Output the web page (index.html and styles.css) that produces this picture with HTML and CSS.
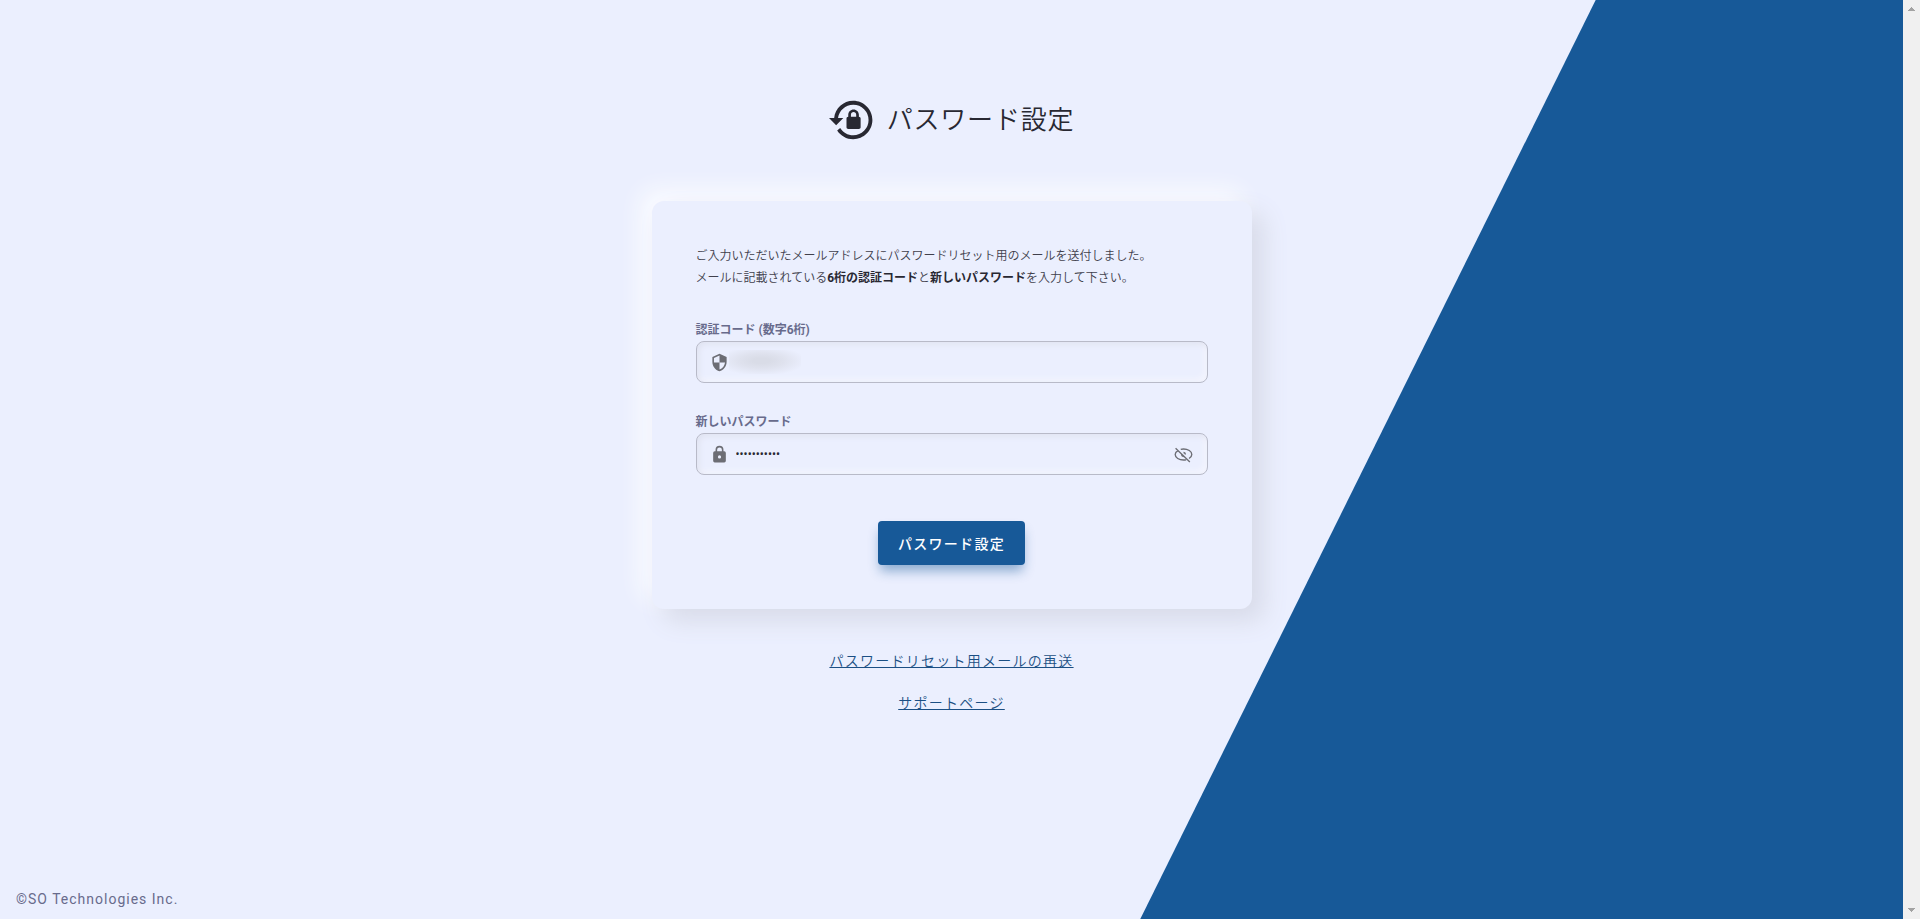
FILE: index.html
```html
<!DOCTYPE html>
<html lang="ja">
<head>
    <meta charset="UTF-8">
    <meta name="viewport" content="width=device-width, initial-scale=1.0">
    <title>パスワード設定</title>
    <link rel="stylesheet" href="styles.css">
</head>
<body>
    <div class="page">
        <main class="content">
            <h1 class="title">
                <svg class="title-icon" viewBox="0 0 24 24" aria-hidden="true"><path d="M12.63,2C18.16,2 22.64,6.5 22.64,12C22.64,17.5 18.16,22 12.63,22C9.12,22 6.05,20.18 4.26,17.43L5.84,16.18C7.25,18.47 9.76,20 12.64,20A8,8 0 0,0 20.64,12A8,8 0 0,0 12.64,4C8.56,4 5.2,7.06 4.71,11H7.47L3.73,14.73L0,11H2.69C3.19,5.95 7.45,2 12.63,2M15.59,10.24C16.09,10.25 16.5,10.65 16.5,11.16V15.77C16.5,16.27 16.09,16.69 15.58,16.69H10.05C9.54,16.69 9.13,16.27 9.13,15.77V11.16C9.13,10.65 9.54,10.25 10.04,10.24V9.23C10.04,7.7 11.29,6.46 12.81,6.46C14.34,6.46 15.59,7.7 15.59,9.23V10.24M12.81,7.86C12.06,7.86 11.44,8.47 11.44,9.23V10.24H14.19V9.23C14.19,8.47 13.57,7.86 12.81,7.86Z"/></svg>
                <span>パスワード設定</span>
            </h1>

            <form class="card">
                <p class="message">ご入力いただいたメールアドレスにパスワードリセット用のメールを送付しました。<br>メールに記載されている<strong>6桁の認証コード</strong>と<strong>新しいパスワード</strong>を入力して下さい。</p>

                <div class="field">
                    <label for="code">認証コード (数字6桁)</label>
                    <div class="input-box">
                        <svg class="icon" viewBox="0 0 24 24" aria-hidden="true"><path d="M12,1L3,5V11C3,16.55 6.84,21.74 12,23C17.16,21.74 21,16.55 21,11V5L12,1M12,11.99H19C18.47,16.11 15.72,19.78 12,20.93V12H5V6.3L12,3.19V11.99Z"/></svg>
                        <span class="masked-code"></span>
                        <input type="text" id="code" inputmode="numeric" maxlength="6">
                    </div>
                </div>

                <div class="field">
                    <label for="password">新しいパスワード</label>
                    <div class="input-box">
                        <svg class="icon" viewBox="0 0 24 24" aria-hidden="true"><path d="M12,17A2,2 0 0,0 14,15A2,2 0 0,0 12,13A2,2 0 0,0 10,15A2,2 0 0,0 12,17M18,8A2,2 0 0,1 20,10V20A2,2 0 0,1 18,22H6A2,2 0 0,1 4,20V10A2,2 0 0,1 6,8H7V6A5,5 0 0,1 12,1A5,5 0 0,1 17,6V8H18M12,3A3,3 0 0,0 9,6V8H15V6A3,3 0 0,0 12,3Z"/></svg>
                        <input type="password" id="password" value="password123">
                        <button type="button" class="toggle" aria-label="パスワードを表示">
                            <svg class="icon icon-line" viewBox="0 0 24 24" aria-hidden="true"><path d="M2 4L20 21.500M8.500 5.600Q10.200 5 12 5C17.500 5 22.500 8 22.500 12Q22.500 14.800 19 17M5 7.200Q1.500 9 1.500 12C1.500 16 6.500 19 12 19Q13.800 19 15.300 18.600M12 9.500Q14.300 9.700 14.500 12M9.500 12Q9.700 14 12 14.500"/></svg>
                        </button>
                    </div>
                </div>

                <button type="submit" class="submit">パスワード設定</button>
            </form>

            <nav class="links">
                <a href="#">パスワードリセット用メールの再送</a>
                <a href="#">サポートページ</a>
            </nav>
        </main>

        <footer class="footer">©SO Technologies Inc.</footer>
    </div>

    <div class="scrollbar" aria-hidden="true">
        <svg viewBox="0 0 7 4"><path d="M3 0h1v1h1v1h1v1h1v1H0V3h1V2h1V1h1z"/></svg>
        <svg viewBox="0 0 7 4"><path d="M0 0h7v1H6v1H5v1H4v1H3V3H2V2H1V1H0z"/></svg>
    </div>
</body>
</html>
```

FILE: styles.css
```css
* {
    box-sizing: border-box;
}

body {
    margin: 0;
    display: flex;
    min-height: 100vh;
    font-family: Roboto, "Noto Sans CJK JP", sans-serif;
    font-size: 14px;
    color: #282832;
    background: #ebeffe;
}

.page {
    flex: 1;
    display: flex;
    flex-direction: column;
    position: relative;
}

/* slanted blue area on the right */
.page::before {
    content: '';
    position: absolute;
    inset: 0;
    background: #175998;
    clip-path: polygon(83.85% 0, 100% 0, 100% 100%, 59.92% 100%);
}

.content {
    flex: 1;
    display: flex;
    flex-direction: column;
    align-items: center;
    position: relative;
    padding: 97px 16px 0;
}

.title {
    display: flex;
    align-items: center;
    gap: 12px;
    height: 46px;
    margin: 0 0 58px;
    font-size: 26px;
    font-weight: 350;
    line-height: 38px;
    letter-spacing: 0.03em;
}

.title-icon {
    width: 46px;
    height: 46px;
    fill: #282832;
}

.card {
    display: flex;
    flex-direction: column;
    width: 100%;
    max-width: 600px;
    padding: 44px;
    border-radius: 12px;
    background: #ebeffe;
    box-shadow: 12px 12px 24px #d8dbe9, -10px -10px 24px #fcfdff;
}

.message {
    margin: 0 0 32px;
    font-size: 12px;
    font-weight: 350;
    line-height: 22px;
    color: #40404c;
}

.message strong {
    color: #282832;
}

.field {
    margin-bottom: 30px;
}

.field label {
    display: block;
    padding-bottom: 1px;
    font-size: 12px;
    font-weight: bold;
    line-height: 19px;
    color: #686b8c;
}

.input-box {
    display: flex;
    align-items: center;
    height: 42px;
    padding: 0 14px 0 13px;
    border: 1px solid #b8bac8;
    border-radius: 8px;
    box-shadow: inset 2px 2px 6px #dfe2f0, inset -2px -2px 6px #f8f9ff;
}

.input-box input {
    flex: 1;
    min-width: 0;
    padding: 0 7px;
    border: 0;
    outline: 0;
    background: none;
    font-family: inherit;
    font-size: 12px;
    color: #282832;
}

.icon {
    display: block;
    flex: none;
    width: 19px;
    height: 19px;
    fill: #6c6d74;
}

.icon-line {
    fill: none;
    stroke: #6c6d74;
    stroke-width: 1.7;
}

.masked-code {
    width: 72px;
    height: 24px;
    background: radial-gradient(ellipse at 45% 45%, #d9dce7 15%, #dfe2ee 40%, #ebeffe 80%);
}

.toggle {
    padding: 0;
    border: 0;
    background: none;
    cursor: pointer;
}

.submit {
    align-self: center;
    height: 44px;
    margin-top: 16px;
    padding: 0 20px;
    border: 0;
    border-radius: 4px;
    background: #175998;
    box-shadow: 0 8px 12px -2px rgba(23, 89, 152, 0.45);
    color: #fff;
    font-family: inherit;
    font-size: 14px;
    font-weight: 500;
    letter-spacing: 0.09em;
    cursor: pointer;
}

.links {
    display: flex;
    flex-direction: column;
    align-items: center;
    gap: 22px;
    margin-top: 42px;
}

.links a {
    font-weight: 350;
    line-height: 20px;
    letter-spacing: 0.09em;
    color: #1b4f84;
}

.footer {
    position: relative;
    padding: 0 16px 10px;
    line-height: 20px;
    letter-spacing: 1px;
    color: #686b8c;
}

.scrollbar {
    display: flex;
    flex-direction: column;
    justify-content: space-between;
    align-items: center;
    width: 17px;
    padding: 7px 0;
    background: #f0f0f0;
}

.scrollbar svg {
    width: 7px;
    height: 4px;
    fill: #a3a3a3;
}
```
